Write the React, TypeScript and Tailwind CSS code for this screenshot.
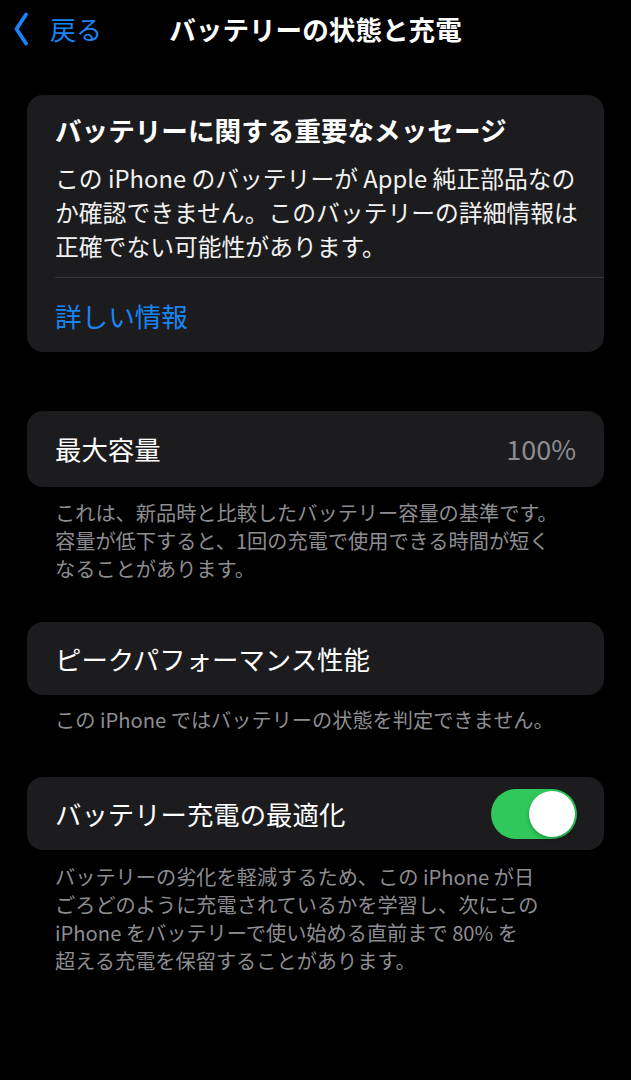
const font = { fontFamily: '"Noto Sans CJK JP", "Noto Sans", sans-serif' }

function Lines({ lines }: { lines: string[] }) {
  return (
    <>
      {lines.map((l) => (
        <span key={l} className="block whitespace-nowrap">{l}</span>
      ))}
    </>
  )
}

function Footer({ lines, className = '' }: { lines: string[]; className?: string }) {
  return (
    <div className={`px-[55px] text-[20.2px] leading-[28px] text-[#8d8d92] ${className}`}>
      <Lines lines={lines} />
    </div>
  )
}

export default function App() {
  return (
    <div className="w-[631px] h-[1080px] bg-black text-white overflow-hidden" style={font}>
      {/* nav bar */}
      <div className="relative flex items-center h-[58px]">
        <div className="flex items-center pl-[13px] text-[#1a84f2]">
          <svg width="16" height="34" viewBox="0 0 16 34" fill="none">
            <path d="M13 2.5 L3.5 17 L13 31.5" stroke="currentColor" strokeWidth="3.8" strokeLinecap="round" strokeLinejoin="round" />
          </svg>
          <span className="text-[26px] ml-[21px] leading-none">戻る</span>
        </div>
        <div className="absolute left-0 right-0 text-center text-[26.6px] font-bold leading-none pointer-events-none">
          バッテリーの状態と充電
        </div>
      </div>

      {/* important message */}
      <div className="mx-[27px] mt-[37px] rounded-[16px] bg-[#1c1c1e]">
        <div className="px-[28px] pt-[18px]">
          <div className="text-[26.6px] font-bold leading-[34px]">バッテリーに関する重要なメッセージ</div>
          <div className="mt-[14px] text-[23.8px] leading-[34px] text-[#f2f2f2]">
            <Lines lines={['この iPhone のバッテリーが Apple 純正部品なの', 'か確認できません。このバッテリーの詳細情報は', '正確でない可能性があります。']} />
          </div>
        </div>
        <div className="ml-[28px] mt-[14px] h-px bg-[#38383a]" />
        <div className="px-[28px] pt-[21px] pb-[19px] text-[26.6px] leading-[34px] text-[#1a84f2]">詳しい情報</div>
      </div>

      {/* max capacity */}
      <div className="mx-[27px] mt-[59px] h-[76px] rounded-[16px] bg-[#1c1c1e] flex items-center justify-between px-[28px]">
        <span className="text-[26.4px]">最大容量</span>
        <span className="text-[27px] text-[#8d8d92]">100%</span>
      </div>
      <Footer
        className="mt-[12px]"
        lines={['これは、新品時と比較したバッテリー容量の基準です。', '容量が低下すると、1回の充電で使用できる時間が短く', 'なることがあります。']}
      />

      {/* peak performance */}
      <div className="mx-[27px] mt-[39px] h-[73px] rounded-[16px] bg-[#1c1c1e] flex items-center px-[28px]">
        <span className="text-[26.4px]">ピークパフォーマンス性能</span>
      </div>
      <Footer className="mt-[11px]" lines={['この iPhone ではバッテリーの状態を判定できません。']} />

      {/* optimized charging */}
      <div className="mx-[27px] mt-[43px] h-[73px] rounded-[16px] bg-[#1c1c1e] flex items-center justify-between pl-[28px] pr-[27px]">
        <span className="text-[26.4px]">バッテリー充電の最適化</span>
        <div className="w-[86px] h-[50px] rounded-full bg-[#30c85a] flex items-center justify-end pr-[2px]">
          <div className="w-[46px] h-[46px] rounded-full bg-white shadow-[0_2px_4px_rgba(0,0,0,0.25)]" />
        </div>
      </div>
      <Footer
        className="mt-[13px]"
        lines={['バッテリーの劣化を軽減するため、この iPhone が日', 'ごろどのように充電されているかを学習し、次にこの', 'iPhone をバッテリーで使い始める直前まで 80% を', '超える充電を保留することがあります。']}
      />
    </div>
  )
}
